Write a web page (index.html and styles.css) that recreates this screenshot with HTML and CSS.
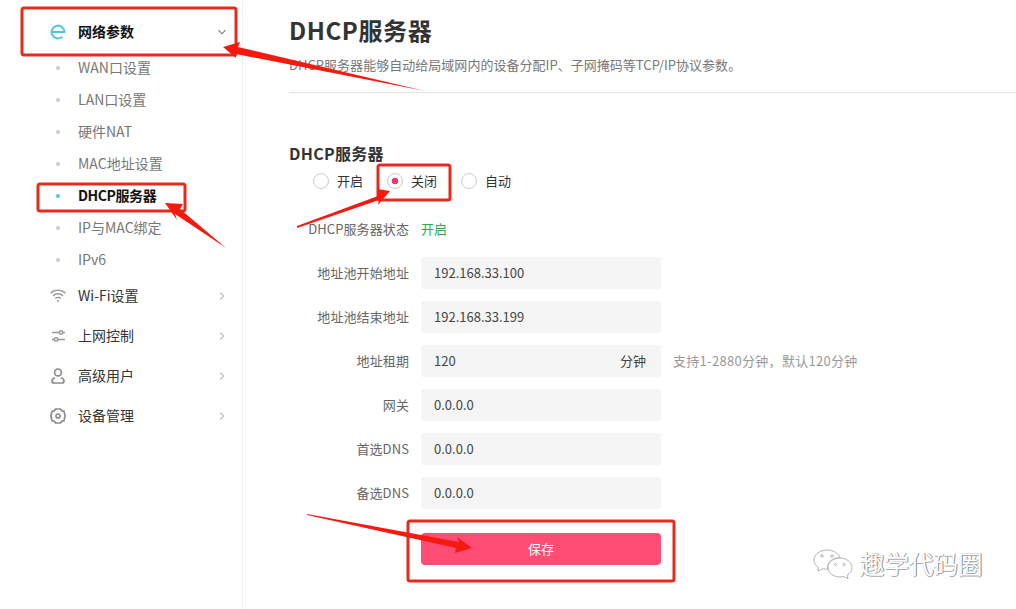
FILE: index.html
```html
<!DOCTYPE html>
<html lang="zh-CN">
<head>
  <meta charset="UTF-8">
  <title>DHCP服务器</title>
  <link rel="stylesheet" href="styles.css">
</head>
<body>
  <div class="page">
    <!-- Sidebar -->
    <aside class="sidebar">
      <div class="menu-item active">
        <svg class="menu-icon" viewBox="0 0 16 16"><path d="M1.600 8H14.400a6.400 6.400 0 1 0-1.900 4.600" fill="none" stroke="#4fc8d6" stroke-width="2"/></svg>
        <span class="menu-text">网络参数</span>
        <svg class="chevron" viewBox="0 0 10 10"><path d="M1.500 3.200 5 6.800l3.500-3.600" fill="none" stroke="#777" stroke-width="1.100"/></svg>
      </div>
      <div class="sub-item"><i class="dot"></i>WAN口设置</div>
      <div class="sub-item"><i class="dot"></i>LAN口设置</div>
      <div class="sub-item"><i class="dot"></i>硬件NAT</div>
      <div class="sub-item"><i class="dot"></i>MAC地址设置</div>
      <div class="sub-item current"><i class="dot"></i>DHCP服务器</div>
      <div class="sub-item"><i class="dot"></i>IP与MAC绑定</div>
      <div class="sub-item"><i class="dot"></i>IPv6</div>
      <div class="menu-item">
        <svg class="menu-icon" viewBox="0 0 16 16" fill="none" stroke="#999" stroke-width="1.400"><path d="M.6 5.200a10.500 10.500 0 0 1 14.800 0"/><path d="M3 7.900a7 7 0 0 1 10 0"/><path d="M5.300 10.500a3.800 3.800 0 0 1 5.400 0"/><circle cx="8" cy="13" r="1" fill="#999" stroke="none"/></svg>
        <span class="menu-text">Wi-Fi设置</span>
        <svg class="chevron" viewBox="0 0 10 10"><path d="M3.200 1.500 6.800 5 3.200 8.500" fill="none" stroke="#bbb" stroke-width="1.100"/></svg>
      </div>
      <div class="menu-item">
        <svg class="menu-icon" viewBox="0 0 16 16" fill="none" stroke="#999" stroke-width="1.500"><path d="M2 4.500h7M13 4.500h2M2 11.500h2M8 11.500h7"/><circle cx="11" cy="4.500" r="1.700"/><circle cx="6" cy="11.500" r="1.700"/></svg>
        <span class="menu-text">上网控制</span>
        <svg class="chevron" viewBox="0 0 10 10"><path d="M3.200 1.500 6.800 5 3.200 8.500" fill="none" stroke="#bbb" stroke-width="1.100"/></svg>
      </div>
      <div class="menu-item">
        <svg class="menu-icon" viewBox="0 0 16 16" fill="none" stroke="#8c8c8c" stroke-width="1.700"><circle cx="8" cy="4.400" r="3.400"/><path d="M5 9.700C3.200 10.200 2 11.400 2 13c0 1.300.8 2 2 2h8c1.200 0 2-.7 2-2 0-1.600-1.200-2.800-3-3.300"/></svg>
        <span class="menu-text">高级用户</span>
        <svg class="chevron" viewBox="0 0 10 10"><path d="M3.200 1.500 6.800 5 3.200 8.500" fill="none" stroke="#bbb" stroke-width="1.100"/></svg>
      </div>
      <div class="menu-item">
        <svg class="menu-icon" viewBox="0 0 16 16" fill="none" stroke="#8c8c8c" stroke-width="1.700" stroke-linejoin="round"><path d="M5.500 1h5l1.200 1.800 2.100.3L15.200 8l-1.400 4.900-2.100.3L10.500 15h-5l-1.200-1.800-2.100-.3L.8 8l1.400-4.900 2.100-.3z"/><circle cx="8" cy="8" r="2"/></svg>
        <span class="menu-text">设备管理</span>
        <svg class="chevron" viewBox="0 0 10 10"><path d="M3.200 1.500 6.800 5 3.200 8.500" fill="none" stroke="#bbb" stroke-width="1.100"/></svg>
      </div>
    </aside>

    <!-- Main content -->
    <main class="content">
      <header class="page-head">
        <h1>DHCP服务器</h1>
        <p>DHCP服务器能够自动给局域网内的设备分配IP、子网掩码等TCP/IP协议参数。</p>
      </header>

      <h2>DHCP服务器</h2>
      <div class="radio-group">
        <div class="radio"><i class="radio-mark"></i>开启</div>
        <div class="radio checked"><i class="radio-mark"></i>关闭</div>
        <div class="radio"><i class="radio-mark"></i>自动</div>
      </div>

      <div class="form">
        <div class="form-row"><label>DHCP服务器状态</label><span class="status">开启</span></div>
        <div class="form-row"><label>地址池开始地址</label><div class="field">192.168.33.100</div></div>
        <div class="form-row"><label>地址池结束地址</label><div class="field">192.168.33.199</div></div>
        <div class="form-row"><label>地址租期</label><div class="field">120<span class="unit">分钟</span></div><span class="hint">支持1-2880分钟，默认120分钟</span></div>
        <div class="form-row"><label>网关</label><div class="field">0.0.0.0</div></div>
        <div class="form-row"><label>首选DNS</label><div class="field">0.0.0.0</div></div>
        <div class="form-row"><label>备选DNS</label><div class="field">0.0.0.0</div></div>
        <div class="form-row save-row"><label></label><button class="save-btn">保存</button></div>
      </div>
    </main>
  </div>

  <!-- Red markup drawn over the screenshot -->
  <svg class="markup" viewBox="0 0 1016 609">
    <g fill="none" stroke="#e8291f" stroke-width="3" stroke-linejoin="round">
      <rect x="22" y="8" width="214" height="47" rx="2"/>
      <rect x="38" y="184" width="147" height="27" rx="2"/>
      <rect x="378" y="165" width="72" height="35" rx="2"/>
      <rect x="408" y="521" width="266" height="60" rx="2"/>
    </g>
    <g fill="#f5190f">
      <polygon points="223,47 240,42 238,47 425,91 236,54 236,58"/>
      <polygon points="165,203 183,204 180,209 226,248 175,214 177,220"/>
      <polygon points="390,191 377,189 378,196 297,226 297,228 379,200 378,205"/>
      <polygon points="472,548 457,537 459,542 307,514 307,515 456,548 455,553"/>
    </g>
  </svg>

  <!-- Watermark -->
  <div class="watermark">
    <svg class="wm-icon" viewBox="0 0 40 30" fill="#fff" stroke="#aaa" stroke-width=".9"><path d="M14 1C7 1 1 5.500 1 11c0 3 1.700 5.600 4.500 7.500L5 22l5-2.300c1.500.4 3 .6 4.500.5C14 14 19 8 27 9 26 4.500 20.500 1 14 1z"/><path d="M27 9c-6.500 0-12 4.200-12 9.500S20.500 28 27 28c1.300 0 2.600-.2 3.800-.5L35 30l-.8-3.800c3-1.800 4.800-4.500 4.800-7.700C39 13.200 33.500 9 27 9z"/><circle cx="9" cy="7" r="1.200"/><circle cx="19" cy="7" r="1.200"/><circle cx="22.500" cy="15.500" r="1"/><circle cx="31" cy="15.500" r="1"/></svg>
    <span class="wm-text">趣学代码圈</span>
  </div>
</body>
</html>
```

FILE: styles.css
```css
* {
  box-sizing: border-box;
}

body {
  margin: 0;
  background: #fff;
  color: #333;
  font-family: "Noto Sans CJK SC", "Noto Sans", sans-serif;
  font-size: 13px;
  overflow: hidden;
}

.page {
  display: flex;
  height: 609px;
}

/* Sidebar */
.sidebar {
  width: 243px;
  flex-shrink: 0;
  padding-top: 12px;
  border-right: 1px solid #eee;
}

.menu-item {
  display: flex;
  align-items: center;
  height: 40px;
  padding-left: 50px;
  font-size: 14px;
  color: #333;
}

.menu-item.active {
  font-weight: bold;
  color: #111;
}

.menu-icon {
  width: 16px;
  height: 16px;
  margin-right: 12px;
}

.menu-text {
  width: 139px;
  padding-bottom: 2px;
}

.chevron {
  width: 10px;
  height: 10px;
}

.sub-item {
  display: flex;
  align-items: center;
  height: 32px;
  padding: 0 0 2px 56px;
  font-size: 14px;
  color: #777;
}

.sub-item.current {
  font-weight: bold;
  color: #111;
  letter-spacing: -.4px;
}

.dot {
  width: 4px;
  height: 4px;
  margin: 2px 18px 0 0;
  background: #ccc;
  border-radius: 50%;
}

.sub-item.current .dot {
  background: #4fc8d6;
}

/* Main */
.content {
  flex: 1;
  padding: 15px 0 0 46px;
}

.page-head {
  padding-bottom: 16px;
  border-bottom: 1px solid #e5e5e5;
}

h1 {
  margin: 0;
  font-size: 24px;
  line-height: 30px;
  padding-bottom: 2px;
  letter-spacing: .6px;
  color: #333;
}

.page-head p {
  margin: 9px 0 0;
  line-height: 18px;
  padding-bottom: 2px;
  letter-spacing: .03px;
  color: #777;
}

h2 {
  margin: 49px 0 0;
  font-size: 16px;
  line-height: 22px;
  letter-spacing: .3px;
  color: #333;
}

.radio-group {
  display: flex;
  margin-top: 6px;
  padding-left: 24px;
}

.radio {
  display: flex;
  align-items: center;
  width: 74px;
  height: 22px;
  padding-bottom: 2px;
  color: #333;
}

.radio-mark {
  width: 16px;
  height: 16px;
  margin: 2px 8px 0 0;
  border: 1px solid #ccc;
  border-radius: 50%;
}

.radio.checked .radio-mark {
  background: radial-gradient(circle, #f0396a 3px, #fff 3.600px);
}

/* Form */
.form {
  display: flex;
  flex-direction: column;
  gap: 12px;
  margin-top: 21px;
}

.form-row {
  display: flex;
  align-items: center;
  height: 32px;
}

.form-row label {
  width: 120px;
  margin-right: 12px;
  padding-bottom: 2px;
  text-align: right;
  letter-spacing: .1px;
  color: #666;
}

.status {
  padding-bottom: 2px;
  color: #2fa84f;
}

.field {
  display: flex;
  justify-content: space-between;
  align-items: center;
  width: 240px;
  height: 32px;
  padding: 0 15px 2px 13px;
  background: #f5f5f5;
  border-radius: 2px;
  color: #444;
}

.hint {
  margin-left: 12px;
  padding-bottom: 2px;
  letter-spacing: .3px;
  color: #999;
}

.save-row {
  margin-top: 12px;
}

.save-btn {
  width: 240px;
  height: 32px;
  padding: 0 0 2px;
  border: none;
  border-radius: 4px;
  background: #ff4d76;
  color: #fff;
  font: inherit;
}

/* Overlays */
.markup {
  position: absolute;
  top: 0;
  left: 0;
  width: 1016px;
  height: 609px;
}

.watermark {
  position: absolute;
  left: 813px;
  top: 547px;
  display: flex;
  align-items: center;
  gap: 7px;
}

.wm-icon {
  width: 40px;
  height: 30px;
}

.wm-text {
  font-size: 24.500px;
  line-height: 34px;
  color: #fff;
  text-shadow: 1px 0 0 #888, 0 1px 0 #aaa;
}
```
